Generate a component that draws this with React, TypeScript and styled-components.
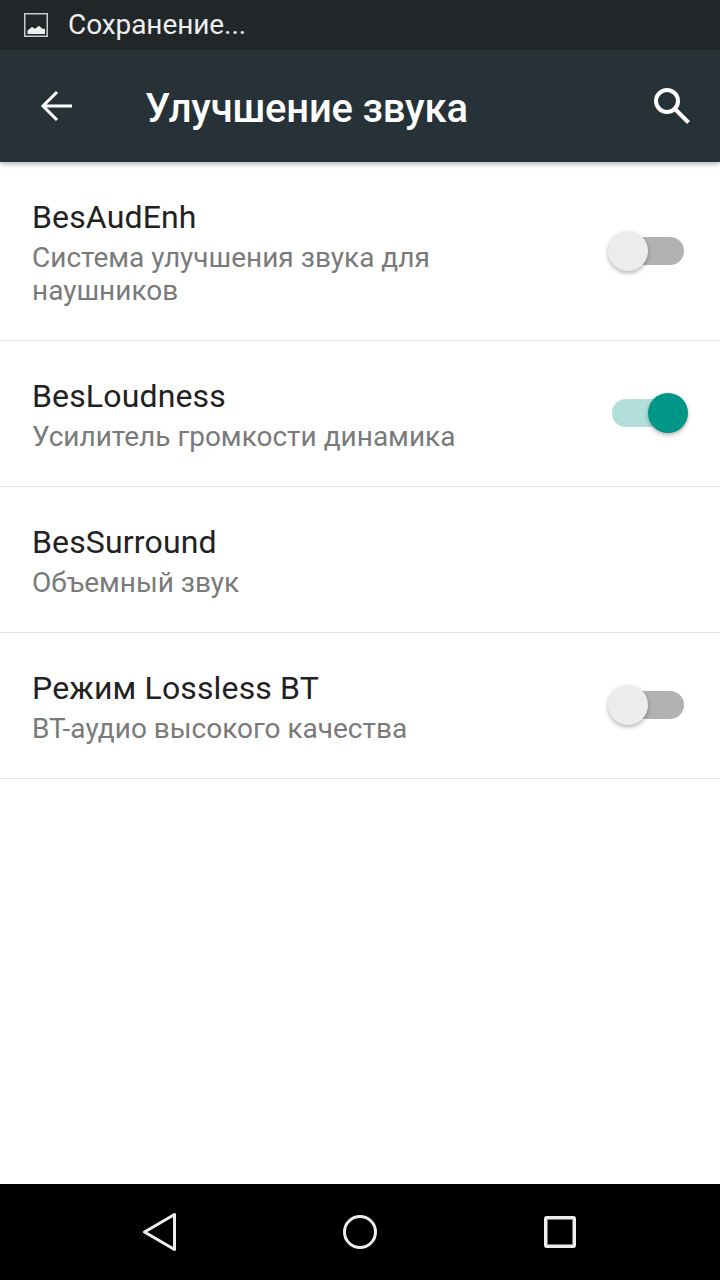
import React from "react";
import styled, { createGlobalStyle } from "styled-components";

const GlobalStyle = createGlobalStyle`
  html, body {
    margin: 0;
    padding: 0;
    background: #fff;
    font-family: Roboto, "Noto Sans", sans-serif;
  }
`;

interface Setting {
  title: string;
  summary: string[];
  toggle?: boolean;
}

const settings: Setting[] = [
  { title: "BesAudEnh", summary: ["Система улучшения звука для", "наушников"], toggle: false },
  { title: "BesLoudness", summary: ["Усилитель громкости динамика"], toggle: true },
  { title: "BesSurround", summary: ["Объемный звук"] },
  { title: "Режим Lossless BT", summary: ["BT-аудио высокого качества"], toggle: false },
];

const App = () => (
  <Screen>
    <GlobalStyle />
    <StatusBar>
      <svg width="24" height="24" viewBox="0 0 24 24">
        <rect x="0.75" y="0.75" width="22.5" height="22.5" fill="none" stroke="#c8cbcc" strokeWidth="1.5" />
        <path d="M3.5 21v-3.5l4.5-3.5 3 1.8 4-3 3 2.6 3 .6V21z" fill="#eee" />
      </svg>
      <StatusText>Сохранение...</StatusText>
    </StatusBar>
    <Toolbar>
      <ToolbarIcon>
        <svg width="32" height="32" viewBox="0 0 32 32" fill="none" stroke="#fff" strokeWidth="3">
          <path d="M32 16H3M17 2L3 16l14 14" />
        </svg>
      </ToolbarIcon>
      <ToolbarTitle>Улучшение звука</ToolbarTitle>
      <svg width="36" height="36" viewBox="0 0 36 36" fill="none" stroke="#fff" strokeWidth="4">
        <circle cx="13" cy="13" r="11" />
        <path d="M21 21L34.5 34.5" />
      </svg>
    </Toolbar>
    <List>
      {settings.map(item => (
        <Row key={item.title}>
          <RowText>
            <RowTitle>{item.title}</RowTitle>
            {item.summary.map(line => (
              <RowSummary key={line}>{line}</RowSummary>
            ))}
          </RowText>
          {item.toggle !== undefined && (
            <SwitchTrack $on={item.toggle}>
              <SwitchThumb $on={item.toggle} />
            </SwitchTrack>
          )}
        </Row>
      ))}
    </List>
    <NavBar>
      <svg width="33" height="38" viewBox="0 0 33 38" fill="none" stroke="#eee" strokeWidth="3" strokeLinejoin="round">
        <path d="M31.5 1.5v35L1.5 19z" />
      </svg>
      <svg width="34" height="34" viewBox="0 0 34 34" fill="none" stroke="#eee" strokeWidth="3">
        <circle cx="17" cy="17" r="15.5" />
      </svg>
      <svg width="32" height="32" viewBox="0 0 32 32" fill="none" stroke="#eee" strokeWidth="3.5" strokeLinejoin="round">
        <rect x="1.75" y="1.75" width="28.5" height="28.5" rx="1" />
      </svg>
    </NavBar>
  </Screen>
);

export default App;

const Screen = styled.div`
  display: flex;
  flex-direction: column;
  width: 720px;
  height: 1280px;
  overflow: hidden;
  background: #fff;
`;

const StatusBar = styled.div`
  display: flex;
  align-items: center;
  flex: 0 0 50px;
  padding-left: 24px;
  box-sizing: border-box;
  background: #212729;
`;

const StatusText = styled.span`
  margin-left: 20px;
  color: #eee;
  font-size: 28px;
  letter-spacing: -0.08px;
  line-height: 50px;
`;

const Toolbar = styled.div`
  position: relative;
  z-index: 1;
  display: flex;
  align-items: center;
  flex: 0 0 112px;
  padding: 0 30px 0 40px;
  box-sizing: border-box;
  background: #263238;
  box-shadow: 0 2px 5px rgba(0, 0, 0, 0.3);
`;

const ToolbarIcon = styled.div`
  display: flex;
  width: 105px;
`;

const ToolbarTitle = styled.h1`
  flex: 1;
  margin: 0;
  padding-top: 4px;
  color: #fff;
  font-size: 40px;
  font-weight: 500;
  letter-spacing: -0.2px;
`;

const List = styled.div`
  flex: 1;
`;

const Row = styled.div`
  display: flex;
  align-items: center;
  padding: 33px 36px 33px 32px;
  border-bottom: 1px solid #e0e0e0;
`;

const RowText = styled.div`
  flex: 1;
`;

const RowTitle = styled.div`
  margin-bottom: 2px;
  color: #212121;
  font-size: 32px;
  letter-spacing: 0.15px;
  line-height: 44px;
`;

const RowSummary = styled.div`
  color: #7a7a7a;
  font-size: 28px;
  line-height: 33px;
`;

const SwitchTrack = styled.div<{ $on: boolean }>`
  position: relative;
  width: 72px;
  height: 28px;
  margin-bottom: 1px;
  border-radius: 14px;
  background: ${p => (p.$on ? "#b2dfdb" : "#b2b2b2")};
`;

const SwitchThumb = styled.div<{ $on: boolean }>`
  position: absolute;
  top: -6px;
  left: ${p => (p.$on ? "36px" : "-4px")};
  width: 40px;
  height: 40px;
  border-radius: 50%;
  background: ${p => (p.$on ? "#009688" : "#ececec")};
  box-shadow: 0 2px 4px rgba(0, 0, 0, 0.3);
`;

const NavBar = styled.div`
  display: flex;
  align-items: center;
  justify-content: space-between;
  flex: 0 0 96px;
  padding: 0 144px 0 143px;
  box-sizing: border-box;
  background: #000;
`;
